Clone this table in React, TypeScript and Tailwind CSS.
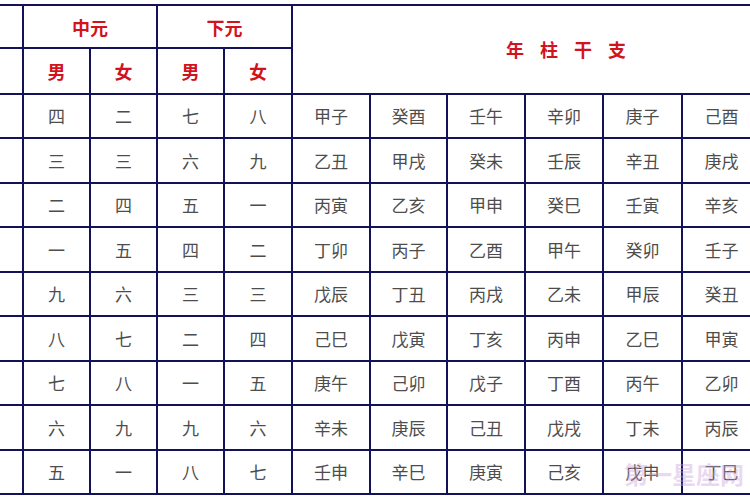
import React from 'react';

const cols = ['中元', '下元'];

const rows: string[][] = [
  ['四', '二', '七', '八', '甲子', '癸酉', '壬午', '辛卯', '庚子', '己酉'],
  ['三', '三', '六', '九', '乙丑', '甲戌', '癸未', '壬辰', '辛丑', '庚戌'],
  ['二', '四', '五', '一', '丙寅', '乙亥', '甲申', '癸巳', '壬寅', '辛亥'],
  ['一', '五', '四', '二', '丁卯', '丙子', '乙酉', '甲午', '癸卯', '壬子'],
  ['九', '六', '三', '三', '戊辰', '丁丑', '丙戌', '乙未', '甲辰', '癸丑'],
  ['八', '七', '二', '四', '己巳', '戊寅', '丁亥', '丙申', '乙巳', '甲寅'],
  ['七', '八', '一', '五', '庚午', '己卯', '戊子', '丁酉', '丙午', '乙卯'],
  ['六', '九', '九', '六', '辛未', '庚辰', '己丑', '戊戌', '丁未', '丙辰'],
  ['五', '一', '八', '七', '壬申', '辛巳', '庚寅', '己亥', '戊申', '丁巳'],
];

const font = { fontFamily: '"Noto Sans CJK SC", "Noto Sans", sans-serif' };

export default function App() {
  return (
    <div className="relative w-[750px] h-[500px] overflow-hidden bg-white" style={font}>
      <div className="pt-[4px]">
        <div className="grid w-[760px] bg-[#12115a] py-[2px] gap-[2px] grid-cols-[22px_65px_65px_65px_66px_76px_75px_76px_76px_77px_77px] grid-rows-[41px_44px_repeat(9,42.44px)]">
          {/* header row 1 */}
          <div className="bg-white" />
          {cols.map((c) => (
            <div
              key={c}
              className="col-span-2 bg-white flex items-center justify-center pt-[2px] text-[18px] font-bold text-[#d2121c]"
            >
              {c}
            </div>
          ))}
          <div className="col-span-6 row-span-2 bg-white flex items-center pl-[213px] text-[18px] font-bold text-[#d2121c] tracking-[16px]">
            年柱干支
          </div>
          {/* header row 2 */}
          <div className="bg-white" />
          {['男', '女', '男', '女'].map((c, i) => (
            <div
              key={i}
              className="bg-white flex items-center justify-center text-[18px] font-bold text-[#d2121c]"
            >
              {c}
            </div>
          ))}
          {/* data */}
          {rows.map((r, ri) => (
            <React.Fragment key={ri}>
              <div className="bg-white" />
              {r.map((v, ci) => (
                <div
                  key={ci}
                  className="bg-white flex items-center justify-center text-[17px] text-[#4d4d4d]"
                >
                  {v}
                </div>
              ))}
            </React.Fragment>
          ))}
        </div>
      </div>
      {/* watermark */}
      <div className="absolute left-[624px] top-[456px] text-[24px] font-bold text-[#c9a3dc] opacity-40 whitespace-nowrap pointer-events-none">
        第一星座网
      </div>
    </div>
  );
}
